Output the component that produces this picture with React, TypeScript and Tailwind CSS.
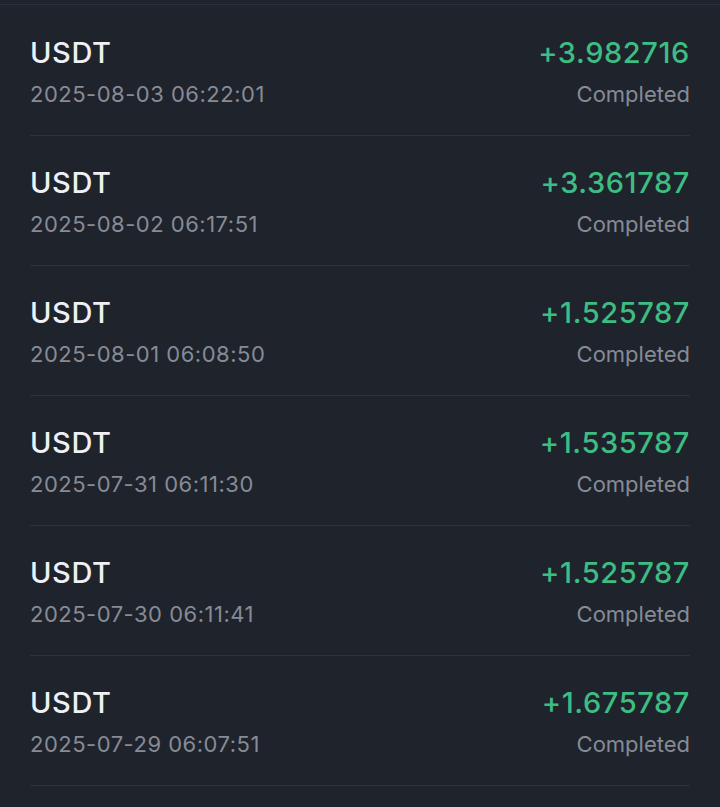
import React from 'react';

interface Record {
  coin: string;
  time: string;
  amount: string;
  status: string;
}

const records: Record[] = [
  { coin: 'USDT', time: '2025-08-03 06:22:01', amount: '+3.982716', status: 'Completed' },
  { coin: 'USDT', time: '2025-08-02 06:17:51', amount: '+3.361787', status: 'Completed' },
  { coin: 'USDT', time: '2025-08-01 06:08:50', amount: '+1.525787', status: 'Completed' },
  { coin: 'USDT', time: '2025-07-31 06:11:30', amount: '+1.535787', status: 'Completed' },
  { coin: 'USDT', time: '2025-07-30 06:11:41', amount: '+1.525787', status: 'Completed' },
  { coin: 'USDT', time: '2025-07-29 06:07:51', amount: '+1.675787', status: 'Completed' },
];

export default function App() {
  return (
    <div
      className="w-[720px] h-[807px] overflow-hidden bg-[#1f232c]"
      style={{ fontFamily: 'Inter, "Noto Sans", sans-serif' }}
    >
      <div className="h-[4px]" />
      <div className="h-px bg-[#2b303a]" />
      <div className="h-px" />
      <div className="px-[30px]">
        {records.map((r, i) => (
          <div key={i} className="h-[130px] flex justify-between items-start pt-[32px] border-b border-[#2d323c]">
            <div className="flex flex-col">
              <span className="text-[29px] leading-[30px] font-medium tracking-[0.6px] text-[#eef0f3]">{r.coin}</span>
              <span className="text-[22px] leading-[24px] mt-[14px] tracking-[0.5px] text-[#868b96]">{r.time}</span>
            </div>
            <div className="flex flex-col items-end">
              <span className="text-[29px] leading-[30px] font-medium tracking-[0.6px] text-[#3dbd83]">{r.amount}</span>
              <span className="text-[22px] leading-[24px] mt-[14px] text-[#868b96]">{r.status}</span>
            </div>
          </div>
        ))}
      </div>
    </div>
  );
}
